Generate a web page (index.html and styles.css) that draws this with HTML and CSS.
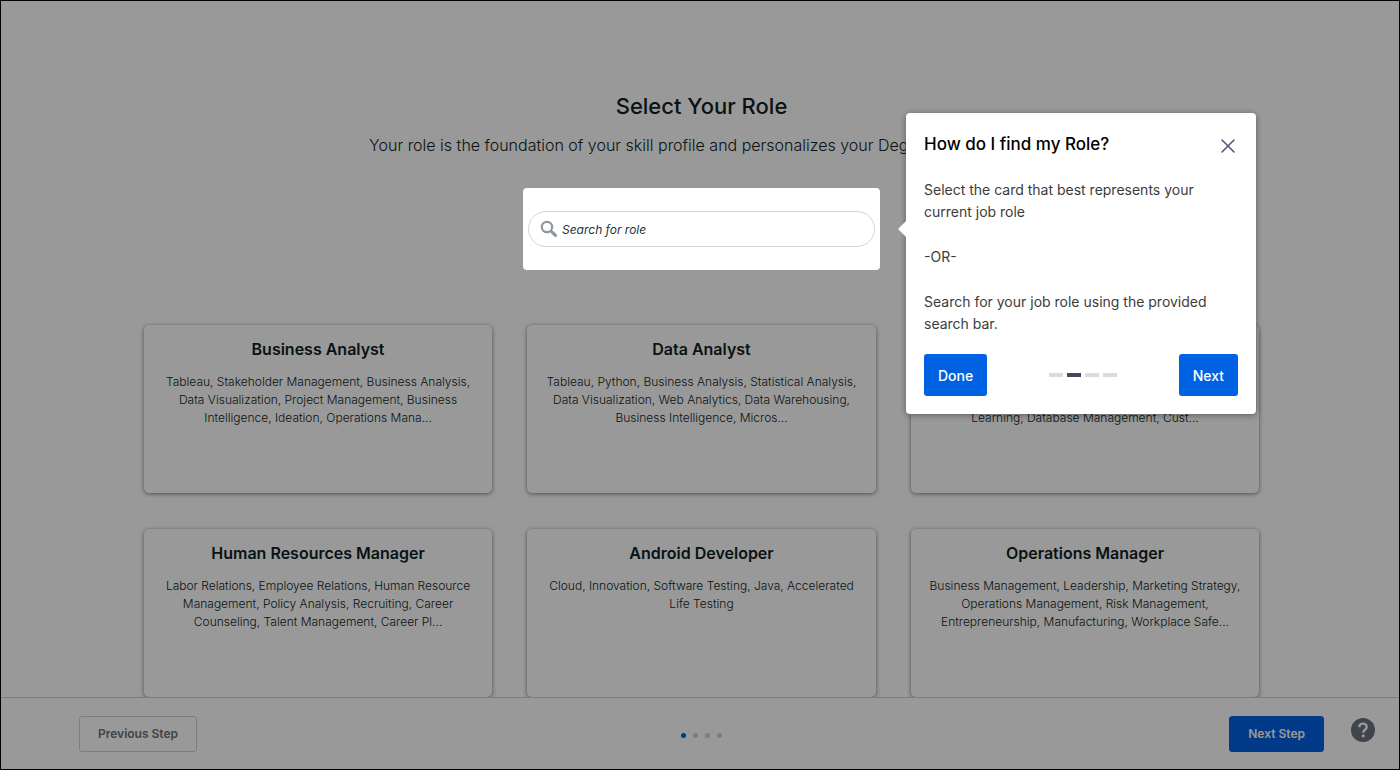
FILE: index.html
```html
<!DOCTYPE html>
<html lang="en">
<head>
<meta charset="utf-8">
<meta name="viewport" content="width=device-width, initial-scale=1">
<title>Select Your Role</title>
<link rel="stylesheet" href="styles.css">
</head>
<body>
<div class="page">
  <main class="main">
    <header class="intro">
      <h1 class="intro-title">Select Your Role</h1>
      <p class="intro-text">Your role is the foundation of your skill profile and personalizes your Degreed experience.</p>
    </header>

    <div class="spotlight">
      <label class="search">
        <svg class="search-icon" viewBox="0 0 18 18" aria-hidden="true">
          <circle cx="7" cy="7" r="5.2" fill="none" stroke="currentColor" stroke-width="2.2"/>
          <path d="M10.6 10.6l2 2" fill="none" stroke="currentColor" stroke-width="2.2"/>
          <path d="M12.4 12.4l3 3" fill="none" stroke="currentColor" stroke-width="3.2" stroke-linecap="round"/>
        </svg>
        <input class="search-input" type="text" placeholder="Search for role" aria-label="Search for role">
      </label>

      <section class="tour" role="dialog" aria-labelledby="tour-title">
        <div class="tour-head">
          <h2 class="tour-title" id="tour-title">How do I find my Role?</h2>
          <button class="tour-close" type="button" aria-label="Close">
            <svg viewBox="0 0 14 14" width="14" height="14" aria-hidden="true">
              <path d="M1 1l12 12M13 1L1 13" fill="none" stroke="currentColor" stroke-width="1.6" stroke-linecap="round"/>
            </svg>
          </button>
        </div>
        <div class="tour-body">
          <p>Select the card that best represents your current job role</p>
          <p>-OR-</p>
          <p>Search for your job role using the provided search bar.</p>
        </div>
        <div class="tour-foot">
          <button class="tour-button" type="button">Done</button>
          <div class="pips"><i class="pip"></i><i class="pip pip-on"></i><i class="pip"></i><i class="pip"></i></div>
          <button class="tour-button" type="button">Next</button>
        </div>
      </section>
    </div>

    <div class="cards">
      <article class="card">
        <h3 class="card-title">Business Analyst</h3>
        <p class="card-text">Tableau, Stakeholder Management, Business Analysis, Data Visualization, Project Management, Business Intelligence, Ideation, Operations Mana...</p>
      </article>
      <article class="card">
        <h3 class="card-title">Data Analyst</h3>
        <p class="card-text">Tableau, Python, Business Analysis, Statistical Analysis, Data Visualization, Web Analytics, Data Warehousing, Business Intelligence, Micros...</p>
      </article>
      <article class="card">
        <h3 class="card-title">Data Scientist</h3>
        <p class="card-text">Python, Data Science, Big Data, Statistics, Analysis, Data Visualization, Data Mining, Machine<br>Learning, Database Management, Cust...</p>
      </article>
      <article class="card">
        <h3 class="card-title">Human Resources Manager</h3>
        <p class="card-text">Labor Relations, Employee Relations, Human Resource Management, Policy Analysis, Recruiting, Career Counseling, Talent Management, Career Pl...</p>
      </article>
      <article class="card">
        <h3 class="card-title">Android Developer</h3>
        <p class="card-text">Cloud, Innovation, Software Testing, Java, Accelerated Life Testing</p>
      </article>
      <article class="card">
        <h3 class="card-title">Operations Manager</h3>
        <p class="card-text">Business Management, Leadership, Marketing Strategy, Operations Management, Risk Management, Entrepreneurship, Manufacturing, Workplace Safe...</p>
      </article>
    </div>
  </main>

  <footer class="footer">
    <div class="footer-side"><button class="step" type="button">Previous Step</button></div>
    <div class="dots"><i class="dot dot-on"></i><i class="dot"></i><i class="dot"></i><i class="dot"></i></div>
    <div class="footer-side footer-end"><button class="step step-primary" type="button">Next Step</button></div>
    <button class="help" type="button" aria-label="Help">
      <svg viewBox="0 0 24 24" width="24" height="24" aria-hidden="true">
        <circle cx="12" cy="12" r="12" fill="#6b7280"/>
        <path d="M8.3 9.2C8.3 6.9 9.8 5.6 12 5.6s3.7 1.3 3.7 3.3c0 2.8-3.5 2.9-3.5 5.8" fill="none" stroke="#fff" stroke-width="2.4"/>
        <rect x="10.8" y="16.6" width="2.7" height="2.7" fill="#fff"/>
      </svg>
    </button>
  </footer>
  <div class="overlay"></div>
</div>
</body>
</html>
```
FILE: styles.css
```css
* { box-sizing: border-box; }

body, h1, h2, h3, p { margin: 0; }

body, button, input { font-family: Inter, "Open Sans", sans-serif; }

button { padding: 0; border: 0; cursor: pointer; }

.page {
  position: relative;
  display: flex;
  flex-direction: column;
  height: 100vh;
  border: 1px solid #000;
  background: #fff;
  color: #0f1e24;
  overflow: hidden;
}

.overlay {
  position: absolute;
  inset: 0;
  z-index: 1;
  background: rgba(0, 0, 0, 0.4);
}

.main {
  flex: 1;
  min-height: 0;
  padding: 90px 10% 0 calc(10% + 3px);
  overflow: hidden;
}

.intro { text-align: center; }

.intro-title {
  font-size: 22px;
  font-weight: 500;
  line-height: 30px;
}

.intro-text {
  margin-top: 12px;
  font-size: 16px;
  font-weight: 300;
  line-height: 24px;
}

/* Search box lifted above the dimmed page */
.spotlight {
  position: relative;
  z-index: 2;
  width: 357px;
  margin: 31px auto 55px;
  padding: 23px 5px;
  border-radius: 4px;
  background: #fff;
}

.search {
  display: flex;
  align-items: center;
  gap: 4px;
  height: 36px;
  padding: 0 11px;
  border: 1px solid #d3d4d6;
  border-radius: 18px;
}

.search-icon {
  flex: none;
  width: 18px;
  height: 18px;
  color: #8f979d;
}

.search-input {
  flex: 1;
  min-width: 0;
  padding: 0;
  border: 0;
  outline: 0;
  background: none;
  font-size: 12px;
  font-style: italic;
}

.search-input::placeholder { color: #24343c; opacity: 1; }

/* Tour popover */
.tour {
  position: absolute;
  top: -75px;
  left: calc(100% + 26px);
  width: 350px;
  padding: 18px;
  border-radius: 4px;
  background: #fff;
  box-shadow: 0 1px 6px rgba(0, 0, 0, 0.4);
}

.tour::before {
  content: "";
  position: absolute;
  top: 108px;
  left: -8px;
  border: 8px solid transparent;
  border-left: 0;
  border-right-color: #fff;
}

.tour-head {
  display: flex;
  justify-content: space-between;
  align-items: flex-start;
}

.tour-title {
  color: #000;
  font-size: 17px;
  font-weight: 500;
  line-height: 26px;
}

.tour-close {
  display: grid;
  place-items: center;
  width: 20px;
  height: 30px;
  background: none;
  color: #50597b;
}

.tour-body {
  display: grid;
  gap: 23px;
  margin-top: 18px;
  color: #3c3c3c;
  font-size: 14px;
  line-height: 22px;
}

.tour-foot {
  display: flex;
  justify-content: space-between;
  align-items: center;
  margin-top: 19px;
}

.tour-button {
  height: 42px;
  padding: 0 14px;
  border-radius: 3px;
  background: #0062e3;
  color: #fff;
  font-size: 14px;
  font-weight: 500;
}

.pips { display: flex; gap: 4px; }

.pip { width: 14px; height: 4px; background: #dcdadd; }

.pip-on { background: #51425c; }

/* Role cards */
.cards {
  display: grid;
  grid-template-columns: repeat(3, 1fr);
  gap: 36px 35px;
}

.card {
  height: 168px;
  padding: 12px 14px;
  border-radius: 5px;
  background: #fff;
  box-shadow: 0 1px 4px rgba(30, 50, 55, 0.6);
  text-align: center;
}

.card-title {
  font-size: 16px;
  font-weight: 600;
  line-height: 24px;
}

.card-text {
  margin-top: 12px;
  color: #0f1e24;
  font-size: 12px;
  font-weight: 300;
  line-height: 18px;
}

/* Wizard footer */
.footer {
  position: relative;
  display: flex;
  align-items: center;
  height: 72px;
  padding: 0 75px 0 78px;
  border-top: 1px solid #cfd0d1;
  background: #fff;
}

.footer-side { display: flex; flex: 1; }

.footer-end { justify-content: flex-end; }

.step {
  height: 36px;
  padding: 0 18px;
  border: 1px solid #cfd0d1;
  border-radius: 3px;
  background: #fff;
  color: #6b7278;
  font-size: 12px;
  font-weight: 600;
}

.step-primary {
  border-color: #0062e3;
  background: #0062e3;
  color: #fff;
}

.dots { display: flex; gap: 7px; margin-top: 4px; }

.dot { width: 5px; height: 5px; border-radius: 50%; background: #cfd0d1; }

.dot-on { background: #0062e3; }

.help {
  position: absolute;
  top: 20px;
  right: 24px;
  display: flex;
  border-radius: 50%;
  background: none;
}
```
